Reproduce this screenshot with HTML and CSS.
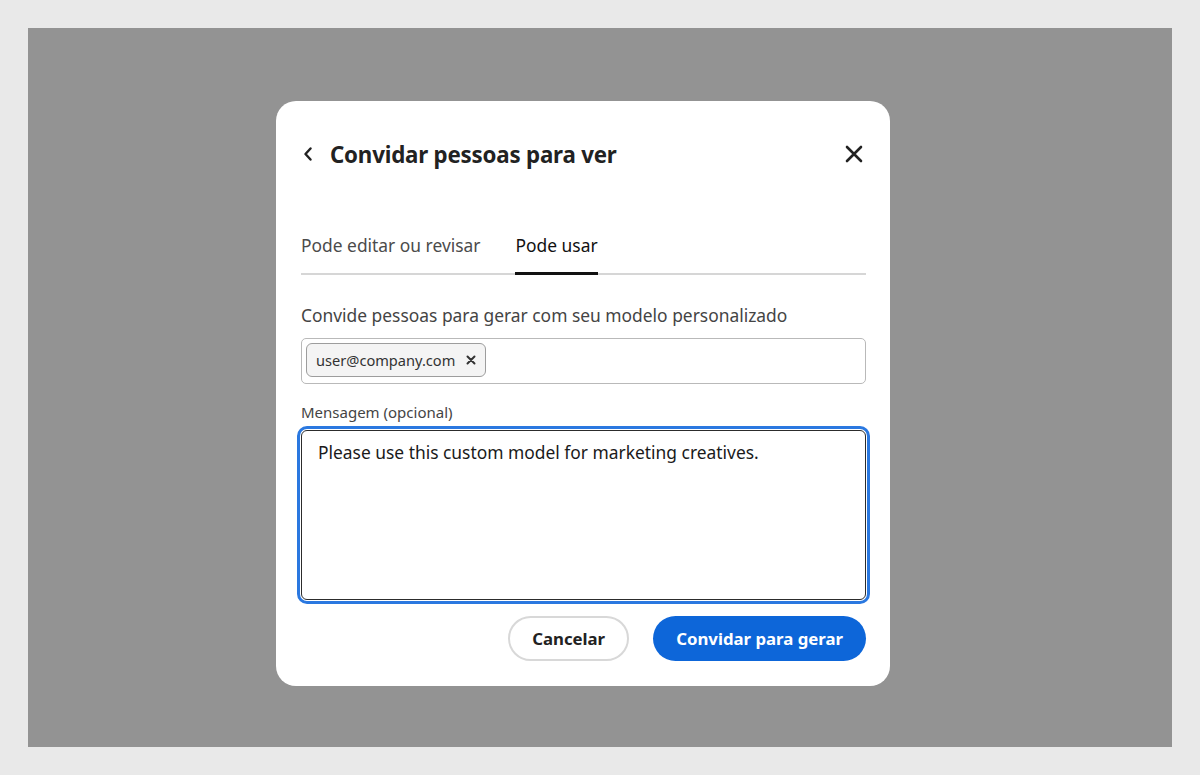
FILE: index.html
```html
<!DOCTYPE html>
<html lang="pt">
<head>
<meta charset="utf-8">
<link rel="stylesheet" href="styles.css">
</head>
<body>
<div class="backdrop">
  <div class="dialog">
    <div class="header">
      <svg class="back" width="10" height="14" viewBox="0 0 10 14"><path d="M7.5 1.5 L2.5 7 L7.5 12.5" fill="none" stroke="#222" stroke-width="2.4" stroke-linecap="round" stroke-linejoin="round"/></svg>
      <h1 class="title">Convidar pessoas para ver</h1>
      <svg class="close" width="18" height="18" viewBox="0 0 18 18"><path d="M2 2 L16 16 M16 2 L2 16" fill="none" stroke="#222" stroke-width="2.6" stroke-linecap="round"/></svg>
    </div>
    <div class="tabs">
      <div class="tab">Pode editar ou revisar</div>
      <div class="tab selected">Pode usar</div>
    </div>
    <div class="field-label">Convide pessoas para gerar com seu modelo personalizado</div>
    <div class="input">
      <span class="chip">user@company.com
        <svg class="chip-x" width="10" height="10" viewBox="0 0 10 10"><path d="M1.5 1.5 L8.5 8.5 M8.5 1.5 L1.5 8.5" fill="none" stroke="#333" stroke-width="2" stroke-linecap="round"/></svg>
      </span>
    </div>
    <div class="msg-label">Mensagem (opcional)</div>
    <div class="textarea">Please use this custom model for marketing creatives.</div>
    <div class="actions">
      <button class="btn secondary">Cancelar</button>
      <button class="btn primary">Convidar para gerar</button>
    </div>
  </div>
</div>
</body>
</html>
```
FILE: styles.css
```css
* { box-sizing: border-box; }
html, body { margin: 0; padding: 0; }
body {
  background: #e9e9e9;
  padding: 28px;
  font-family: "Noto Sans", "Open Sans", sans-serif;
  color: #222;
}
.backdrop {
  background: #939393;
  height: 719px;
  padding: 73px 0 0 248px;
}
.dialog {
  width: 614px;
  height: 585px;
  background: #fff;
  border-radius: 20px;
  padding: 35px 24px 0 25px;
  display: flex;
  flex-direction: column;
}
.header {
  display: flex;
  align-items: center;
  height: 36px;
}
.back { margin-left: 2px; margin-right: 17px; }
.title {
  margin: 0;
  font-size: 22.3px;
  font-weight: 700;
  flex: 1;
  color: #222;
  letter-spacing: -0.2px;
}
.close { margin-right: 3px; }
.tabs {
  margin-top: 57px;
  display: flex;
  gap: 35px;
  border-bottom: 2px solid #d6d6d6;
}
.tab {
  position: relative;
  font-size: 17.4px;
  line-height: 24px;
  padding: 4px 0 16px;
  color: #4b4b4b;
}
.tab.selected { color: #111; }
.tab.selected::after {
  content: "";
  position: absolute;
  left: 0; right: 0;
  bottom: -2px;
  height: 3px;
  background: #111;
}
.field-label {
  margin-top: 28px;
  font-size: 17.4px;
  line-height: 24px;
  color: #444;
}
.input {
  margin-top: 11px;
  height: 46px;
  border: 1px solid #b9b9b9;
  border-radius: 5px;
  padding: 4px;
  display: flex;
  align-items: flex-start;
}
.chip {
  height: 34px;
  display: inline-flex;
  align-items: center;
  gap: 11px;
  padding: 0 9px;
  border: 1px solid #9d9d9d;
  border-radius: 6px;
  background: #f4f4f4;
  font-size: 14.6px;
  color: #333;
}
.msg-label {
  margin-top: 18px;
  font-size: 15px;
  line-height: 20px;
  color: #444;
}
.textarea {
  margin-top: 8px;
  height: 170px;
  border: 1.5px solid #2c2c2c;
  border-radius: 6px;
  outline: 3px solid #2a78e0;
  outline-offset: 1px;
  padding: 9px 16px;
  font-size: 17.4px;
  line-height: 24px;
  color: #1a1a1a;
}
.actions {
  margin-top: 16px;
  display: flex;
  justify-content: flex-end;
  gap: 24px;
}
.btn {
  height: 45px;
  border-radius: 23px;
  font-family: inherit;
  font-size: 16.8px;
  font-weight: 700;
  padding: 0 22px;
  cursor: pointer;
}
.btn.secondary {
  background: #fff;
  border: 2px solid #d8d8d8;
  color: #222;
}
.btn.primary {
  background: #0d66d9;
  border: 0;
  color: #fff;
  padding: 0 23px;
}
```
